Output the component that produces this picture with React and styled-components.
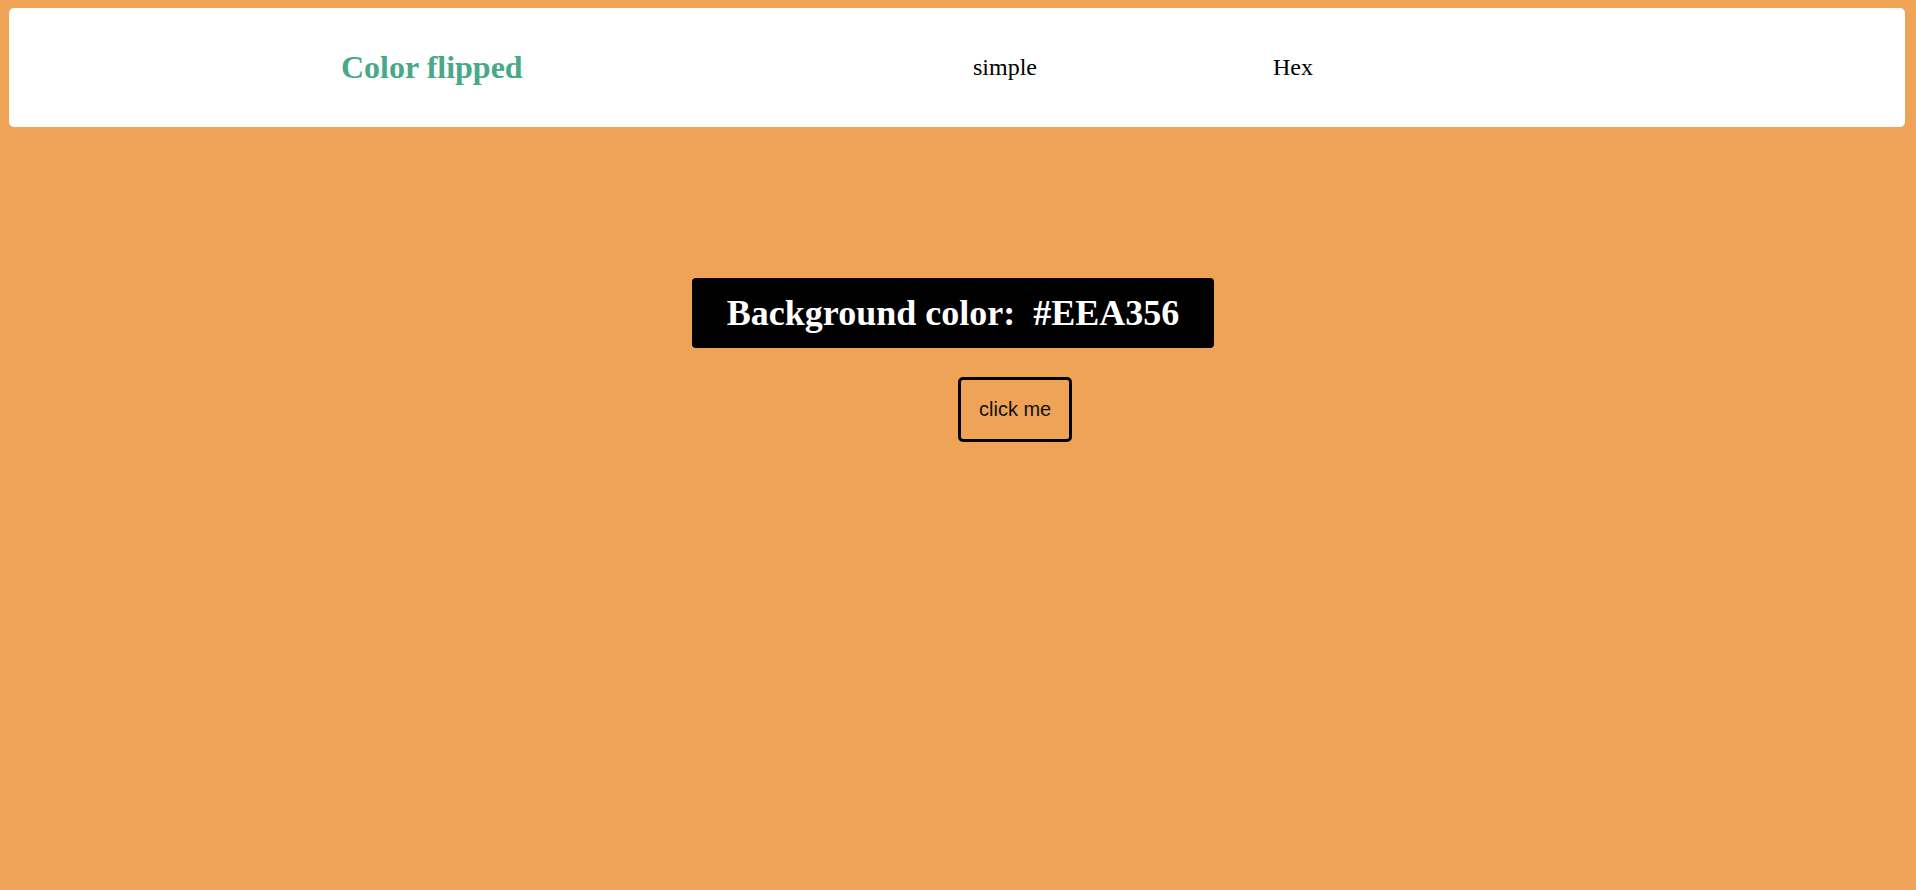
import React, { useState } from 'react'
import styled, { createGlobalStyle } from 'styled-components'

const colors = ['#EEA356', '#4AA98A', '#F15025', '#6C8EBF', '#E5C07B']

function App() {
    const [color, setColor] = useState(colors[0])

    const flip = () => {
        const next = colors[(colors.indexOf(color) + 1) % colors.length]
        setColor(next)
    }

    return (
        <>
            <GlobalStyle bg={color} />
            <Nav>
                <Brand>Color flipped</Brand>
                <Links>
                    <LinkItem>simple</LinkItem>
                    <LinkItem>Hex</LinkItem>
                </Links>
            </Nav>
            <Main>
                <Banner>
                    Background color:&nbsp; <span>{color}</span>
                </Banner>
                <FlipButton onClick={flip}>click me</FlipButton>
            </Main>
        </>
    )
}

const GlobalStyle = createGlobalStyle`
    html, body {
        margin: 0;
        padding: 0;
    }
    body {
        margin: 8px;
        min-height: calc(100vh - 16px);
        background-color: ${(p) => p.bg};
        font-family: "Liberation Serif", "Times New Roman", serif;
    }
`

const Nav = styled.nav`
    display: flex;
    align-items: center;
    height: 119px;
    margin: 0 3px 0 1px;
    padding-left: 332px;
    background-color: #ffffff;
    border-radius: 5px;
`

const Brand = styled.h1`
    flex: 0 0 632px;
    margin: 0;
    font-size: 32px;
    font-weight: bold;
    color: #48a98a;
`

const Links = styled.ul`
    display: flex;
    gap: 236px;
    margin: 0;
    padding: 0;
    list-style: none;
`

const LinkItem = styled.li`
    font-size: 24px;
    color: #000;
    cursor: pointer;
`

const Main = styled.main`
    display: flex;
    flex-direction: column;
    align-items: center;
    padding-top: 151px;
`

const Banner = styled.h2`
    margin: 0 10px 0 0;
    padding: 14px 35px;
    background-color: #000;
    color: #fff;
    font-size: 36px;
    font-weight: bold;
    border-radius: 4px;
    white-space: pre;
`

const FlipButton = styled.button`
    align-self: flex-start;
    margin: 29px 0 0 50%;
    padding: 18px 18px;
    background: transparent;
    border: 3px solid #000;
    border-radius: 5px;
    font-family: "Liberation Sans", Arial, sans-serif;
    font-size: 20px;
    color: #111;
    cursor: pointer;
`

export default App
